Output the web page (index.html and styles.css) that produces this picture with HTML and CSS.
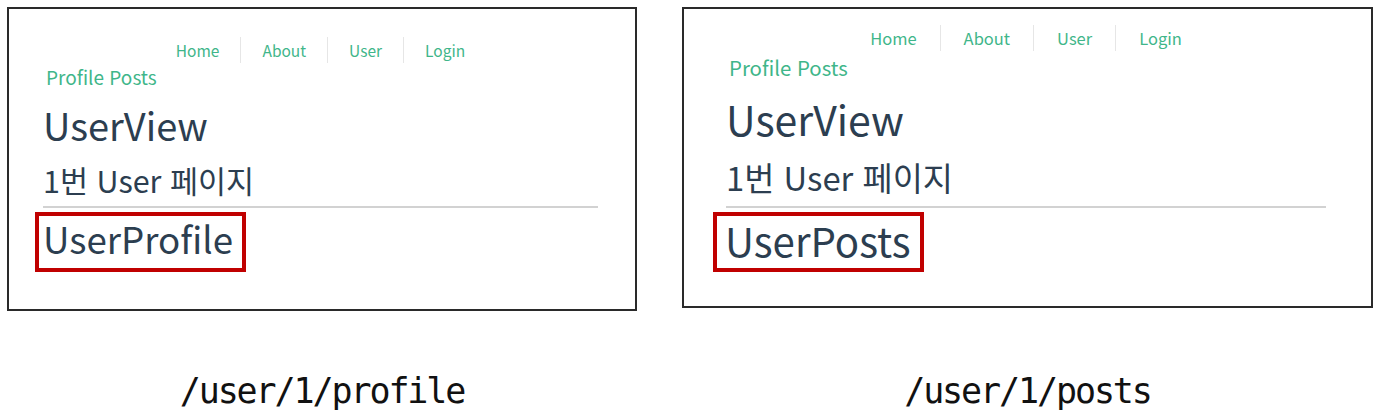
FILE: index.html
```html
<!DOCTYPE html>
<html lang="ko">
<head>
<meta charset="utf-8">
<title>Vue Router nested routes</title>
<link rel="stylesheet" href="styles.css">
</head>
<body>
<div class="board">
  <section class="panel panel--left">
    <nav class="nav">
      <a class="nav__link">Home</a><a class="nav__link">About</a><a class="nav__link">User</a><a class="nav__link">Login</a>
    </nav>
    <div class="subnav"><a class="subnav__link">Profile</a> <a class="subnav__link">Posts</a></div>
    <h1 class="view-title">UserView</h1>
    <h2 class="view-sub">1번 User 페이지</h2>
    <hr class="rule">
    <div class="highlight"><h1 class="child-title">UserProfile</h1></div>
  </section>
  <section class="panel panel--right">
    <nav class="nav">
      <a class="nav__link">Home</a><a class="nav__link">About</a><a class="nav__link">User</a><a class="nav__link">Login</a>
    </nav>
    <div class="subnav"><a class="subnav__link">Profile</a> <a class="subnav__link">Posts</a></div>
    <h1 class="view-title">UserView</h1>
    <h2 class="view-sub">1번 User 페이지</h2>
    <hr class="rule">
    <div class="highlight"><h1 class="child-title">UserPosts</h1></div>
  </section>
  <p class="caption">/user/1/profile</p>
  <p class="caption">/user/1/posts</p>
</div>
</body>
</html>
```

FILE: styles.css
```css
html, body {
  margin: 0;
  padding: 0;
  background: #ffffff;
}

.board {
  display: grid;
  grid-template-columns: 630px 691px;
  column-gap: 45px;
  padding: 7px 0 0 7px;
  align-items: start;
}

.panel {
  box-sizing: border-box;
  border: 2px solid #2a2a2a;
  font-family: "Noto Sans CJK KR", "Noto Sans", sans-serif;
  color: #2c3e50;
  display: flex;
  flex-direction: column;
  align-items: stretch;
}

.panel--left {
  height: 304px;
  padding: 28px 37px 0 34px;
}

.panel--right {
  height: 301px;
  padding: 16px 45px 0 42px;
}

.nav {
  display: flex;
  justify-content: center;
  height: 26px;
}

.nav__link {
  padding: 0 21px;
  line-height: 26px;
  color: #3fb68a;
  font-size: 15.5px;
}

.nav__link + .nav__link {
  border-left: 1px solid #e6e6e6;
}

.panel--right .nav__link {
  font-size: 16.5px;
  padding: 0 23px;
}

.subnav {
  margin-top: 2px;
  padding-left: 3px;
  line-height: 24px;
  font-size: 19px;
  color: #3fb68a;
}

.panel--right .subnav {
  margin-top: 4px;
  font-size: 20.4px;
}

.subnav__link {
  color: #3fb68a;
}

.view-title {
  margin: 14px 0 0;
  font-weight: 400;
  font-size: 38px;
  line-height: 44px;
}

.panel--right .view-title {
  margin-top: 15px;
  font-size: 41px;
  line-height: 48px;
}

.view-sub {
  margin: 15px 0 0;
  font-weight: 400;
  font-size: 30.5px;
  line-height: 36px;
}

.panel--right .view-sub {
  margin-top: 16px;
  font-size: 32.8px;
  line-height: 38px;
}

.rule {
  margin: 8px 0 0;
  height: 0;
  border: 0;
  border-top: 2px solid #d2d2d2;
}

.panel--right .rule {
  margin-top: 10px;
}

.highlight {
  align-self: flex-start;
  margin: 4px 0 0 -8px;
  border: 4px solid #c00000;
  padding: 0 9px 8px 4px;
}

.panel--right .highlight {
  margin: 4px 0 0 -13px;
  padding: 0 9px 4px 8px;
}

.child-title {
  margin: 0;
  font-weight: 400;
  font-size: 36.7px;
  line-height: 44px;
}

.panel--right .child-title {
  font-size: 40.2px;
  line-height: 48px;
}

.caption {
  margin: 60px 0 0;
  text-align: center;
  font-family: "DejaVu Sans Mono", monospace;
  font-size: 35px;
  line-height: 40px;
  letter-spacing: -2.1px;
  color: #111111;
}
```
